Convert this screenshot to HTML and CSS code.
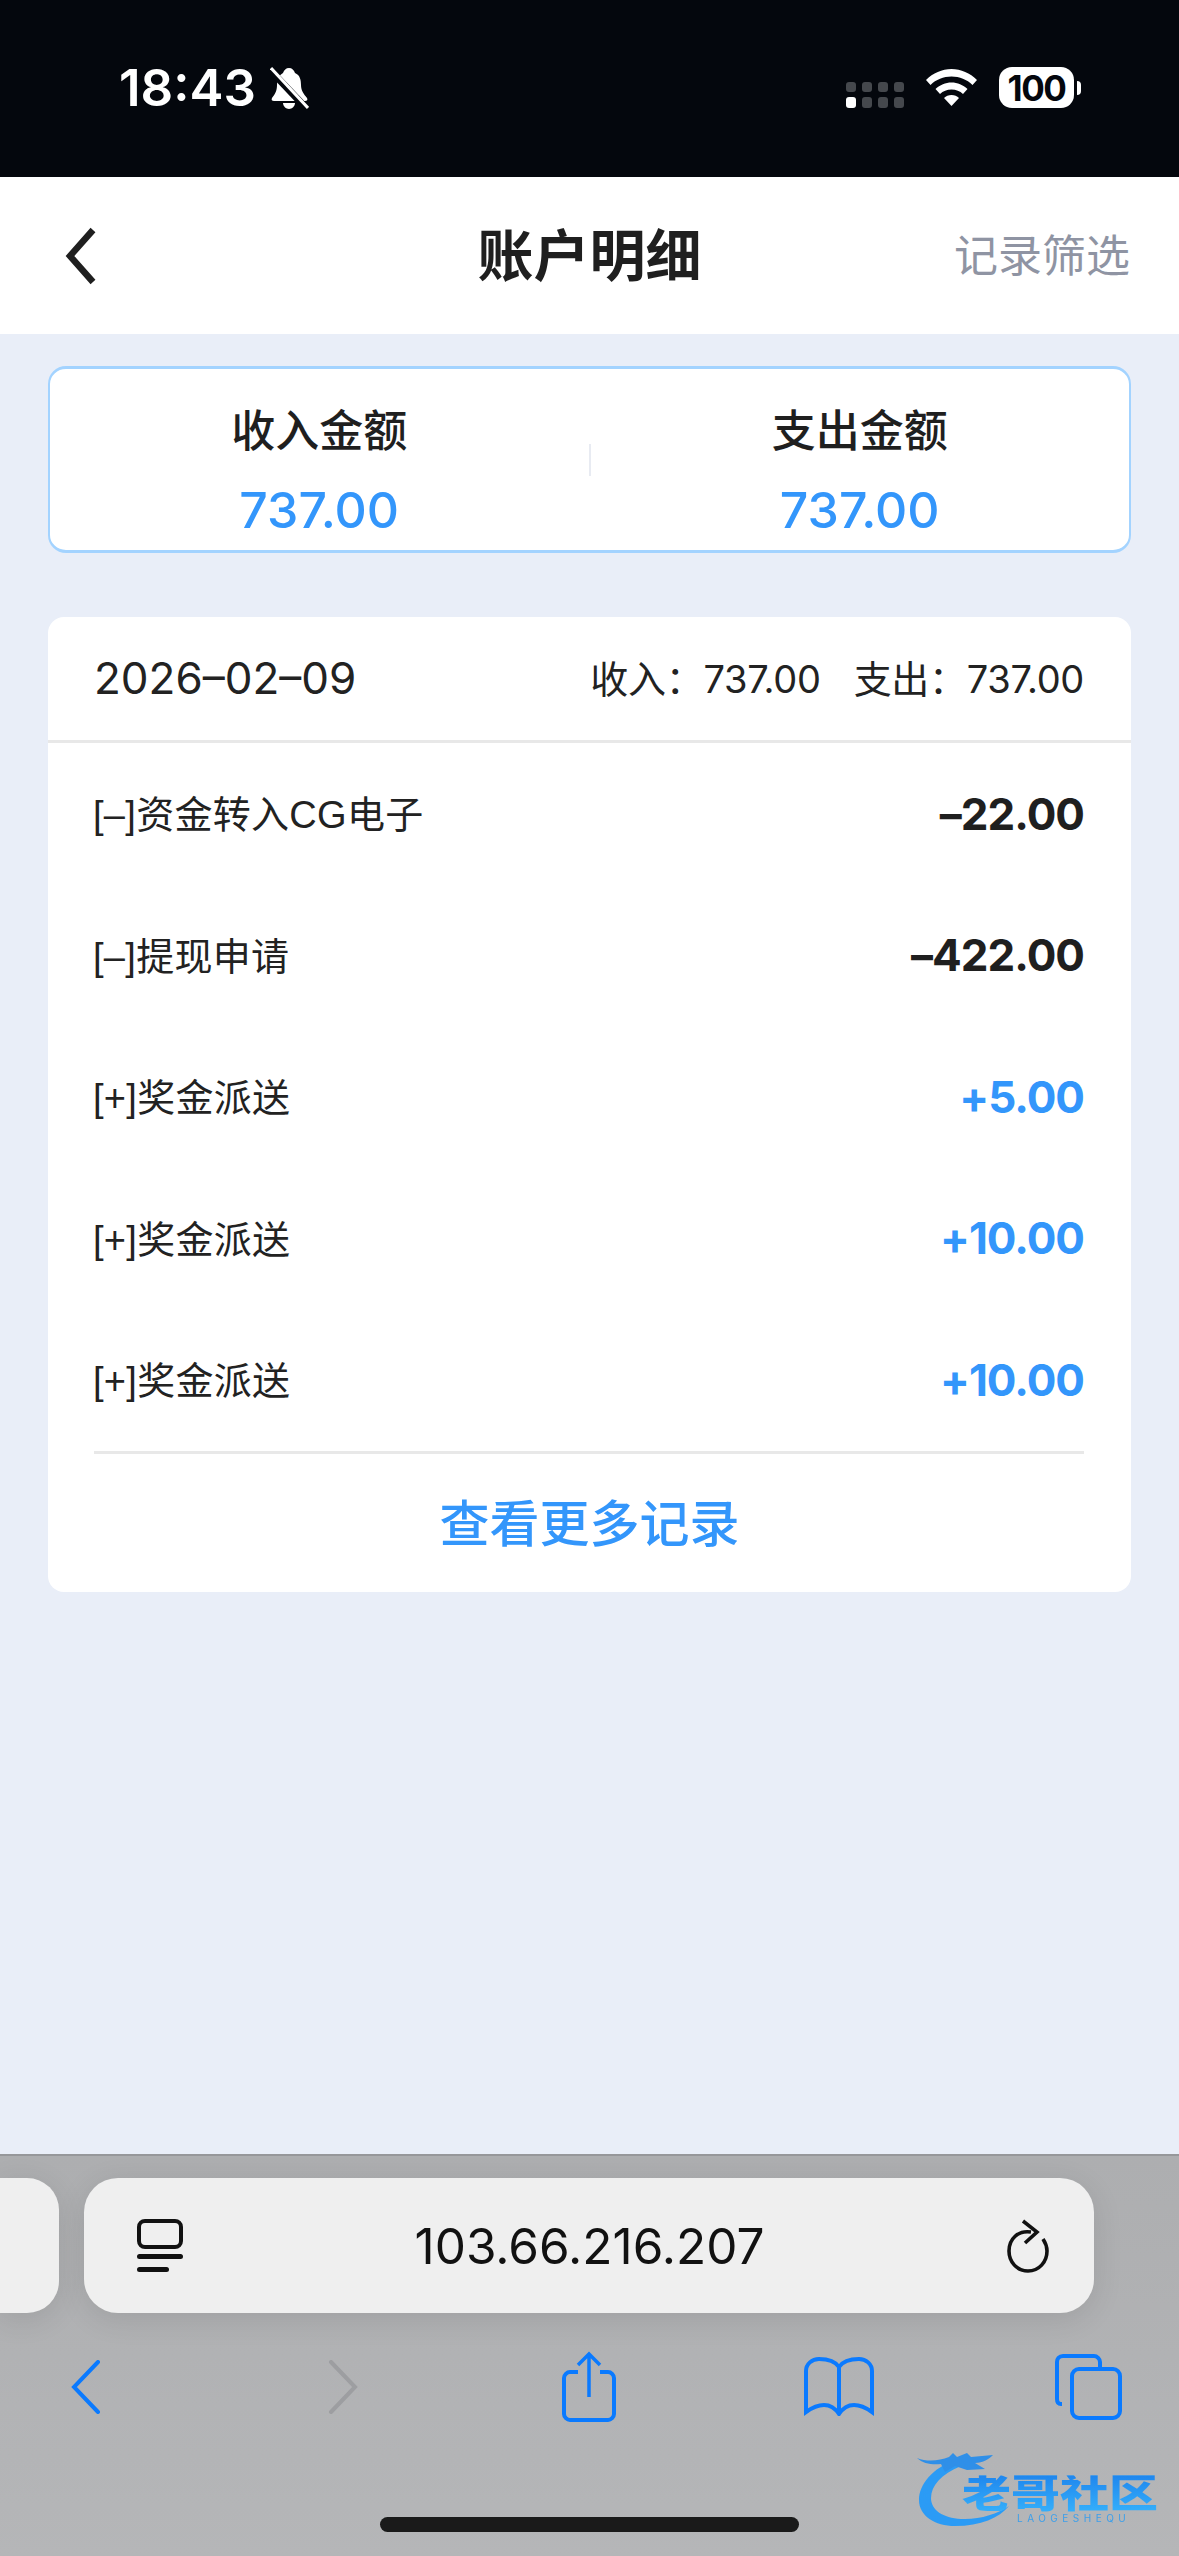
FILE: index.html
```html
<!DOCTYPE html>
<html>
	<head>
		<meta charset="UTF-8">
		<title>账户明细</title>
		<link rel="stylesheet" href="styles.css">
	</head>
	<body>
		<div class="status">
			<div class="status-left">
				<span class="time">18:43</span>
				<svg class="bell" viewBox="0 0 39 42">
					<path d="M19 1c3 0 5 2 6 5 5 2 6 7 6 12 0 6 3 9 6 13 1 2 0 3-2 3H4c-2 0-3-1-2-3 3-4 5-7 5-13 0-5 2-10 6-12 1-3 3-5 6-5z" fill="#fff"/>
					<path d="M13 36h12c0 3-3 6-6 6s-6-3-6-6z" fill="#fff"/>
					<path d="M0 3l36 38" stroke="#04070d" stroke-width="7" fill="none"/>
					<path d="M1 1l37 40" stroke="#fff" stroke-width="3" fill="none"/>
				</svg>
			</div>
			<div class="status-right">
				<svg class="dots" viewBox="0 0 58 26">
					<g fill="#45484d">
						<rect x="0" y="0" width="10" height="10" rx="3"/><rect x="16" y="0" width="10" height="10" rx="3"/><rect x="32" y="0" width="10" height="10" rx="3"/><rect x="48" y="0" width="10" height="10" rx="3"/>
						<rect x="16" y="15" width="10" height="11" rx="3"/><rect x="32" y="15" width="10" height="11" rx="3"/><rect x="48" y="15" width="10" height="11" rx="3"/>
					</g>
					<rect x="0" y="15" width="10" height="11" rx="3" fill="#fff"/>
				</svg>
				<svg class="wifi" viewBox="0 0 51 37">
					<path d="M25.500 0C35 0 44 4 51 11l-4.500 5C41 10.500 33.500 7.500 25.500 7.500S10 10.500 4.500 16L0 11C7 4 16 0 25.500 0z" fill="#fff"/>
					<path d="M25.500 13.500c6 0 11.500 2.500 16 6.500L37 25c-3-3-7-4.500-11.500-4.500S17 22 14 25l-4.500-5c4.500-4 10-6.500 16-6.500z" fill="#fff"/>
					<path d="M25.500 26c3 0 5.500 1 7.500 3L25.500 37 18 29c2-2 4.500-3 7.500-3z" fill="#fff"/>
				</svg>
				<div class="battery"><span class="battery-num">100</span></div>
				<span class="battery-nub"></span>
			</div>
		</div>

		<div class="nav">
			<svg class="nav-back" viewBox="0 0 32 58"><path d="M28 3L5 29l23 26" fill="none" stroke="#1f1f1f" stroke-width="6.500"/></svg>
			<div class="nav-title">账户明细</div>
			<div class="nav-filter">记录筛选</div>
		</div>

		<div class="main">
			<div class="summary">
				<div class="summary-col">
					<div class="summary-label">收入金额</div>
					<div class="summary-value">737.00</div>
				</div>
				<div class="summary-line"></div>
				<div class="summary-col">
					<div class="summary-label">支出金额</div>
					<div class="summary-value">737.00</div>
				</div>
			</div>

			<div class="card">
				<div class="card-head">
					<span class="card-date">2026–02–09</span>
					<div class="card-total">
						<span>收入：737.00</span>
						<span>支出：737.00</span>
					</div>
				</div>
				<ul class="list">
					<li><span>[–]资金转入CG电子</span><b>–22.00</b></li>
					<li><span>[–]提现申请</span><b>–422.00</b></li>
					<li><span>[+]奖金派送</span><b class="plus">+5.00</b></li>
					<li><span>[+]奖金派送</span><b class="plus">+10.00</b></li>
					<li><span>[+]奖金派送</span><b class="plus">+10.00</b></li>
				</ul>
				<div class="more">查看更多记录</div>
			</div>
		</div>

		<div class="bar">
			<div class="url-row">
				<div class="tab-prev"></div>
				<div class="url">
					<svg class="url-icon" viewBox="0 0 46 54">
						<rect x="2" y="2" width="42" height="26" rx="6" fill="none" stroke="#111" stroke-width="4"/>
						<rect x="0" y="35" width="46" height="5" rx="2.500" fill="#111"/>
						<rect x="0" y="48" width="32" height="5" rx="2.500" fill="#111"/>
					</svg>
					<span class="url-text">103.66.216.207</span>
					<svg class="url-reload" viewBox="0 0 44 54">
						<path d="M25 13C12 11 3 20 3 32c0 11 8 20 19 20s19-9 19-20c0-5-2-9-4-12" fill="none" stroke="#111" stroke-width="3.600"/>
						<path d="M17 2l14 11-12 11" fill="none" stroke="#111" stroke-width="3.600"/>
					</svg>
				</div>
			</div>
			<div class="tools">
				<svg class="tool-back" viewBox="0 0 30 54"><path d="M27 2L3 27l24 25" fill="none" stroke="#0a7aff" stroke-width="4" stroke-linecap="round"/></svg>
				<svg class="tool-next" viewBox="0 0 30 54"><path d="M3 2l24 25L3 52" fill="none" stroke="#9d9ea1" stroke-width="4" stroke-linecap="round"/></svg>
				<svg class="tool-share" viewBox="0 0 54 71">
					<path d="M16 21H8c-3 0-6 3-6 6v36c0 3 3 6 6 6h38c3 0 6-3 6-6V27c0-3-3-6-6-6h-8" fill="none" stroke="#0a7aff" stroke-width="4"/>
					<path d="M27 46V3M16 14L27 3l11 11" fill="none" stroke="#0a7aff" stroke-width="3.500"/>
				</svg>
				<svg class="tool-book" viewBox="0 0 70 59">
					<path d="M35 10C31 4 24 2 15 2 8 2 2 7 2 14v41c7-5 12-7 18-7 6 0 11 3 15 9 4-6 9-9 15-9 6 0 11 2 18 7V14c0-7-6-12-13-12-9 0-16 2-20 8z" fill="none" stroke="#0a7aff" stroke-width="4"/>
					<path d="M35 10v45" stroke="#0a7aff" stroke-width="4"/>
				</svg>
				<svg class="tool-tabs" viewBox="0 0 67 66">
					<path d="M7 50H6c-3 0-4-2-4-5V8c0-3 2-6 6-6h31c3 0 6 3 6 6v6" fill="none" stroke="#0a7aff" stroke-width="4"/>
					<rect x="17" y="15" width="48" height="49" rx="7" fill="none" stroke="#0a7aff" stroke-width="4"/>
				</svg>
			</div>
			<div class="home"></div>

			<div class="mark">
				<svg class="mark-dragon" viewBox="0 0 100 76">
					<path d="M38 8C16 16 2 32 2 48c0 16 16 26 36 26 26 0 44-8 54-20-12 8-30 14-48 13C26 66 14 58 14 46c0-12 10-24 30-32z" fill="#2b9bf5"/>
					<path d="M0 6c10 4 22 3 32-1l4-4 4 4 10-4 4 4 22-2c-4 4-10 8-18 8l10 6-18 1-12-4-10 6-4-8C16 13 6 12 0 6z" fill="#2f8fe8"/>
				</svg>
				<div class="mark-name">老哥社区</div>
				<div class="mark-sub">LAOGESHEQU</div>
			</div>
		</div>
	</body>
</html>
```

FILE: styles.css
```css
* {
	margin: 0;
	padding: 0;
	box-sizing: border-box;
}
html, body {
	height: 100%;
}
body {
	width: 1179px;
	height: 2556px;
	display: flex;
	flex-direction: column;
	overflow: hidden;
	background: #e9eef8;
	font-family: Inter, "Noto Sans CJK SC", sans-serif;
	color: #1f1f1f;
}
li {
	list-style: none;
}

/* status bar */
.status {
	height: 177px;
	flex: none;
	background: #04070d;
	display: flex;
	justify-content: space-between;
	padding: 58px 98px 0 119px;
}
.status-left {
	display: flex;
	align-items: flex-start;
}
.time {
	font-size: 51px;
	line-height: 60px;
	font-weight: 600;
	color: #fff;
}
.bell {
	width: 39px;
	height: 42px;
	margin: 9px 0 0 14px;
}
.status-right {
	display: flex;
	align-items: flex-start;
}
.dots {
	width: 58px;
	height: 26px;
	margin: 24px 22px 0 0;
}
.wifi {
	width: 51px;
	height: 37px;
	margin: 11px 22px 0 0;
}
.battery {
	width: 75px;
	height: 41px;
	margin-top: 9px;
	background: #fff;
	border-radius: 13px;
	display: flex;
	align-items: center;
	justify-content: center;
}
.battery-num {
	font-size: 35px;
	font-weight: 700;
	color: #04070d;
	letter-spacing: -1.500px;
}
.battery-nub {
	width: 4px;
	height: 14px;
	margin: 23px 0 0 3px;
	background: #fff;
	border-radius: 0 7px 7px 0;
}

/* title bar */
.nav {
	height: 157px;
	flex: none;
	background: #fff;
	display: grid;
	grid-template-columns: 1fr auto 1fr;
	align-items: center;
	padding: 0 49px 0 65px;
}
.nav-back {
	width: 32px;
	height: 58px;
}
.nav-title {
	font-size: 56px;
	font-weight: 700;
	margin: 0 16px 8px 0;
}
.nav-filter {
	font-size: 44px;
	color: #8f94a3;
	text-align: right;
	white-space: nowrap;
	margin-bottom: 6px;
}

/* content */
.main {
	flex: 1;
	padding: 32px 48px 0;
}
.summary {
	height: 187px;
	background: #fff;
	border: 2px solid #a3d3ff;
	border-top-width: 3px;
	border-bottom-width: 3px;
	border-radius: 18px;
	display: flex;
	align-items: flex-start;
}
.summary-col {
	flex: 1;
	text-align: center;
	padding-top: 27px;
}
.summary-label {
	font-size: 44px;
	font-weight: 500;
	line-height: 70px;
}
.summary-value {
	font-size: 50px;
	font-weight: 500;
	line-height: 88px;
	color: #3396fb;
}
.summary-line {
	width: 2px;
	height: 32px;
	margin-top: 75px;
	background: #e8ebf2;
}

.card {
	margin-top: 64px;
	background: #fff;
	border-radius: 16px;
	overflow: hidden;
}
.card-head {
	height: 126px;
	padding: 0 47px 1px 46px;
	display: flex;
	justify-content: space-between;
	align-items: center;
	border-bottom: 3px solid #e8e8e8;
}
.card-date {
	font-size: 44px;
	color: #222;
}
.card-total {
	display: flex;
	gap: 33px;
	font-size: 38px;
	letter-spacing: -.3px;
	color: #222;
	margin-bottom: 4px;
}
.list {
	margin: 0 47px 0 46px;
	border-bottom: 3px solid #e8e8e8;
}
.list li {
	height: 141.500px;
	display: flex;
	justify-content: space-between;
	align-items: center;
	font-family: "Liberation Sans", "Noto Sans CJK SC", sans-serif;
	font-size: 38px;
	letter-spacing: .3px;
	color: #222;
}
.list li span {
	margin: 0 0 4px -1px;
}
.list b {
	font-family: Inter, sans-serif;
	font-size: 44px;
	font-weight: 700;
	letter-spacing: -1px;
	color: #1f1f1f;
}
.list b.plus {
	color: #3396fb;
}
.more {
	height: 138px;
	padding-bottom: 6px;
	display: flex;
	align-items: center;
	justify-content: center;
	font-size: 50px;
	font-weight: 500;
	color: #3396fb;
}

/* safari bar */
.bar {
	height: 402px;
	flex: none;
	position: relative;
	background: linear-gradient(#adaeb0, #b5b6b8);
	border-top: 2px solid #96979a;
}
.url-row {
	display: flex;
	gap: 25px;
	padding-top: 22px;
}
.tab-prev {
	width: 59px;
	height: 135px;
	background: #efefef;
	border-radius: 0 32px 32px 0;
	box-shadow: 0 6px 30px rgba(0,0,0,.1);
}
.url {
	width: 1010px;
	height: 135px;
	padding: 0 44px 0 53px;
	background: #efefef;
	border-radius: 34px;
	box-shadow: 0 6px 30px rgba(0,0,0,.1);
	display: flex;
	align-items: center;
	justify-content: space-between;
}
.url-icon {
	width: 46px;
	height: 54px;
}
.url-text {
	font-size: 49.500px;
	color: #111;
	margin-right: 10px;
}
.url-reload {
	width: 44px;
	height: 54px;
}
.tools {
	height: 71px;
	margin-top: 38px;
	position: relative;
	display: flex;
	align-items: center;
	padding-left: 71px;
}
.tool-back {
	width: 30px;
	height: 54px;
}
.tool-next {
	width: 30px;
	height: 54px;
	margin-left: 227px;
}
.tool-share {
	width: 54px;
	height: 71px;
	margin-left: 204px;
}
.tool-book {
	width: 70px;
	height: 59px;
	margin-left: 188px;
}
.tool-tabs {
	width: 67px;
	height: 66px;
	margin-left: 181px;
}
.home {
	width: 419px;
	height: 15px;
	margin: 95px auto 0;
	background: #1a1a1a;
	border-radius: 8px;
}

/* watermark */
.mark {
	position: absolute;
	left: 917px;
	top: 294px;
	width: 245px;
	height: 78px;
	filter: blur(.7px);
}
.mark-dragon {
	position: absolute;
	left: 0;
	top: 2px;
	width: 100px;
	height: 76px;
}
.mark-name {
	position: absolute;
	left: 45px;
	top: 20px;
	font-size: 49px;
	line-height: 48px;
	font-weight: 900;
	white-space: nowrap;
	transform: scaleY(.78);
	background: linear-gradient(#1f86ee, #35b0fb);
	-webkit-background-clip: text;
	background-clip: text;
	color: transparent;
}
.mark-sub {
	position: absolute;
	left: 100px;
	top: 63px;
	font-size: 10px;
	line-height: 11px;
	letter-spacing: 4.500px;
	color: #3d9fea;
	white-space: nowrap;
}
```
